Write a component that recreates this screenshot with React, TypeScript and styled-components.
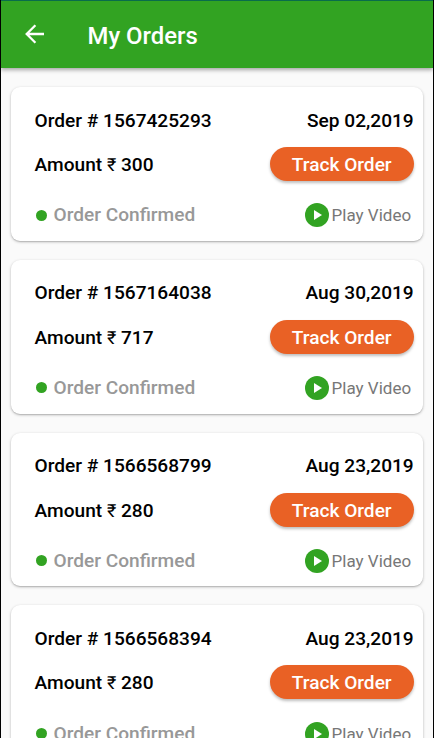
import React from "react";
import styled, { createGlobalStyle } from "styled-components";

const GlobalStyle = createGlobalStyle`
  * { box-sizing: border-box; }
  body { margin: 0; background: #fafafa; }
`;

const Screen = styled.div`
  width: 434px;
  height: 738px;
  overflow: hidden;
  display: flex;
  flex-direction: column;
  background: #fafafa;
  border-left: 1px solid #000;
  border-right: 1px solid #000;
  font-family: Roboto, sans-serif;
`;

const AppBar = styled.header`
  flex: none;
  height: 68px;
  display: flex;
  align-items: center;
  padding: 2px 22px 0;
  gap: 40.5px;
  background: #32a322;
  border-top: 1px solid #096c4b;
  box-shadow: 0 2px 4px rgba(0, 0, 0, 0.34);
`;

const BackButton = styled.button`
  width: 24px;
  height: 28px;
  padding: 0;
  border: 0;
  background: none;
  display: flex;
  align-items: center;
  justify-content: center;

  svg { flex: none; display: block; margin-top: -3px; }
`;

const Title = styled.h1`
  margin: 0;
  color: #fff;
  font-size: 23.9px;
  font-weight: 500;
  line-height: 28px;
`;

const OrderList = styled.main`
  display: flex;
  flex-direction: column;
  gap: 19px;
  padding: 19px 10px 0;
`;

const Card = styled.article`
  flex: none;
  height: 153.8px;
  padding: 21.5px 9.3px 0 23.6px;
  background: #fff;
  border-radius: 9px;
  box-shadow: 0 1px 3px rgba(0, 0, 0, 0.26), 0 1px 1px rgba(0, 0, 0, 0.1);
`;

const Row = styled.div<{ $height: number; $inset?: number }>`
  display: flex;
  align-items: center;
  justify-content: space-between;
  height: ${(p) => p.$height}px;
  padding-right: ${(p) => p.$inset ?? 0}px;
`;

const Label = styled.span<{ $drop?: number }>`
  padding-top: ${(p) => p.$drop ?? 0}px;
  color: #000;
  font-size: 19.1px;
  font-weight: 500;
  line-height: 24px;
  white-space: pre;
`;

const Currency = styled.span`
  font-size: 18px;
  font-weight: 400;
`;

const TrackButton = styled.button`
  width: 144px;
  height: 34px;
  padding: 1px 0 0;
  border: 0;
  border-radius: 17px;
  background: #e96125;
  color: #fff;
  font: 500 19.1px/33px Roboto, sans-serif;
  box-shadow: 0 2px 3px rgba(0, 0, 0, 0.26);
`;

const Status = styled.span`
  display: flex;
  align-items: center;
  gap: 6.6px;
  padding-left: 1.4px;
  color: #989898;
  font-size: 19.1px;
  font-weight: 500;
  line-height: 24px;
`;

const Dot = styled.i`
  width: 11px;
  height: 11px;
  border-radius: 50%;
  background: #32a322;
`;

const VideoLink = styled.span`
  display: flex;
  align-items: center;
  gap: 3px;
  color: #777;
  font-size: 17px;
  line-height: 24px;
`;

const orders = [
  { id: "1567425293", date: "Sep 02,2019", amount: 300 },
  { id: "1567164038", date: "Aug 30,2019", amount: 717 },
  { id: "1566568799", date: "Aug 23,2019", amount: 280 },
  { id: "1566568394", date: "Aug 23,2019", amount: 280 },
];

const BackArrow = () => (
  <svg width="20" height="20" viewBox="0 0 20 20" fill="none" stroke="#fff" strokeWidth="2.3">
    <path d="M19 10H2M10.4 1.3L1.7 10l8.7 8.7" />
  </svg>
);

const PlayIcon = () => (
  <svg width="24" height="24" viewBox="0 0 24 24">
    <circle cx="12" cy="12" r="12" fill="#32a322" />
    <path d="M9 6.9v10.2l8-5.1z" fill="#fff" />
  </svg>
);

export default function App() {
  return (
    <>
      <GlobalStyle />
      <Screen>
        <AppBar>
          <BackButton aria-label="Back">
            <BackArrow />
          </BackButton>
          <Title>My Orders</Title>
        </AppBar>
        <OrderList>
          {orders.map((order) => (
            <Card key={order.id}>
              <Row $height={24}>
                <Label>Order # {order.id}</Label>
                <Label>{order.date}</Label>
              </Row>
              <Row $height={63}>
                <Label $drop={2}>
                  Amount <Currency>₹</Currency> {order.amount}
                </Label>
                <TrackButton>Track Order</TrackButton>
              </Row>
              <Row $height={39.4} $inset={2.6}>
                <Status>
                  <Dot />
                  Order Confirmed
                </Status>
                <VideoLink>
                  <PlayIcon />
                  Play Video
                </VideoLink>
              </Row>
            </Card>
          ))}
        </OrderList>
      </Screen>
    </>
  );
}
